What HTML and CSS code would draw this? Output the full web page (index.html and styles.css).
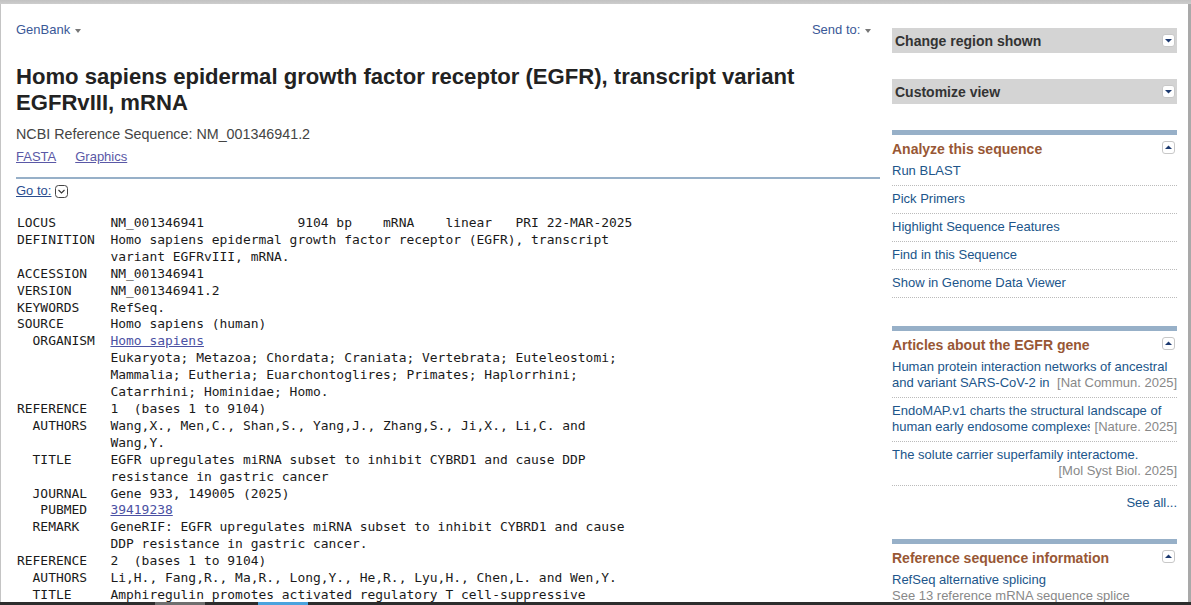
FILE: index.html
```html
<!DOCTYPE html>
<html lang="en">
<head>
<meta charset="utf-8">
<title>Homo sapiens epidermal growth factor receptor (EGFR), transcript variant EGFRvIII, mRNA</title>
<link rel="stylesheet" href="styles.css">
</head>
<body>
<div class="chrome-top"></div>
<div class="frame">
  <div class="page">
    <main class="main">
      <div class="topbar">
        <a class="menu-link" href="#">GenBank <span class="caret"></span></a>
        <a class="menu-link" href="#">Send to: <span class="caret"></span></a>
      </div>
      <h1 class="title">Homo sapiens epidermal growth factor receptor (EGFR), transcript variant EGFRvIII, mRNA</h1>
      <p class="refseq">NCBI Reference Sequence: NM_001346941.2</p>
      <p class="formats"><a href="#">FASTA</a><a href="#">Graphics</a></p>
      <div class="rule"></div>
      <div class="goto"><a href="#">Go to:</a><span class="goto-icon"><svg width="13" height="13" viewBox="0 0 13 13"><rect x="0.5" y="0.5" width="12" height="12" rx="3" ry="3" fill="#fff" stroke="#444"/><path d="M3.5 5 L6.5 8 L9.5 5" fill="none" stroke="#333" stroke-width="1.1"/></svg></span></div>
<pre class="record">LOCUS       NM_001346941            9104 bp    mRNA    linear   PRI 22-MAR-2025
DEFINITION  Homo sapiens epidermal growth factor receptor (EGFR), transcript
            variant EGFRvIII, mRNA.
ACCESSION   NM_001346941
VERSION     NM_001346941.2
KEYWORDS    RefSeq.
SOURCE      Homo sapiens (human)
  ORGANISM  <a href="#">Homo sapiens</a>
            Eukaryota; Metazoa; Chordata; Craniata; Vertebrata; Euteleostomi;
            Mammalia; Eutheria; Euarchontoglires; Primates; Haplorrhini;
            Catarrhini; Hominidae; Homo.
REFERENCE   1  (bases 1 to 9104)
  AUTHORS   Wang,X., Men,C., Shan,S., Yang,J., Zhang,S., Ji,X., Li,C. and
            Wang,Y.
  TITLE     EGFR upregulates miRNA subset to inhibit CYBRD1 and cause DDP
            resistance in gastric cancer
  JOURNAL   Gene 933, 149005 (2025)
   PUBMED   <a href="#">39419238</a>
  REMARK    GeneRIF: EGFR upregulates miRNA subset to inhibit CYBRD1 and cause
            DDP resistance in gastric cancer.
REFERENCE   2  (bases 1 to 9104)
  AUTHORS   Li,H., Fang,R., Ma,R., Long,Y., He,R., Lyu,H., Chen,L. and Wen,Y.
  TITLE     Amphiregulin promotes activated regulatory T cell-suppressive
            function via the AREG/EGFR signaling pathway in lung
            adenocarcinoma
</pre>
    </main>
    <aside class="sidebar">
      <div class="collapsed-box">
        <span>Change region shown</span>
        <span class="toggle"><svg width="13" height="13" viewBox="0 0 13 13"><path d="M3 5 L10 5 L6.5 8.5 Z" fill="#1d3a70"/></svg></span>
      </div>
      <div class="collapsed-box">
        <span>Customize view</span>
        <span class="toggle"><svg width="13" height="13" viewBox="0 0 13 13"><path d="M3 5 L10 5 L6.5 8.5 Z" fill="#1d3a70"/></svg></span>
      </div>

      <section class="portlet">
        <div class="portlet-head">
          <h3>Analyze this sequence</h3>
          <span class="toggle"><svg width="13" height="13" viewBox="0 0 13 13"><path d="M3 8 L10 8 L6.5 4.5 Z" fill="#1d3a70"/></svg></span>
        </div>
        <ul class="plist">
          <li><a href="#">Run BLAST</a></li>
          <li><a href="#">Pick Primers</a></li>
          <li><a href="#">Highlight Sequence Features</a></li>
          <li><a href="#">Find in this Sequence</a></li>
          <li><a href="#">Show in Genome Data Viewer</a></li>
        </ul>
      </section>

      <section class="portlet">
        <div class="portlet-head">
          <h3>Articles about the EGFR gene</h3>
          <span class="toggle"><svg width="13" height="13" viewBox="0 0 13 13"><path d="M3 8 L10 8 L6.5 4.5 Z" fill="#1d3a70"/></svg></span>
        </div>
        <ul class="plist articles">
          <li><a class="atitle" href="#">Human protein interaction networks of ancestral and variant SARS-CoV-2 in organ-specific cells and bodily fluids.</a><span class="journal">[Nat Commun. 2025]</span></li>
          <li><a class="atitle" href="#">EndoMAP.v1 charts the structural landscape of human early endosome complexes.</a><span class="journal">[Nature. 2025]</span></li>
          <li><a class="atitle" href="#">The solute carrier superfamily interactome.</a><span class="journal">[Mol Syst Biol. 2025]</span></li>
        </ul>
        <div class="seeall"><a href="#">See all...</a></div>
      </section>

      <section class="portlet">
        <div class="portlet-head">
          <h3>Reference sequence information</h3>
          <span class="toggle"><svg width="13" height="13" viewBox="0 0 13 13"><path d="M3 8 L10 8 L6.5 4.5 Z" fill="#1d3a70"/></svg></span>
        </div>
        <div class="refinfo">
          <div class="refinfo-title">RefSeq alternative splicing</div>
          <div class="refinfo-desc">See 13 reference mRNA sequence splice variants</div>
        </div>
      </section>
    </aside>
  </div>
</div>
<div class="taskbar"><span class="seg seg-gray"></span><span class="seg seg-blue"></span></div>
</body>
</html>
```
FILE: styles.css
```css
html, body {
  margin: 0;
  padding: 0;
  height: 100%;
  overflow: hidden;
  background: #fff;
}
body {
  font-family: "Liberation Sans", Arial, sans-serif;
  color: #333;
}
a { text-decoration: none; }

.chrome-top {
  height: 4px;
  background: linear-gradient(#c2c2c2, #cdcdcd);
}
.frame {
  border-left: 1px solid #c4c4c4;
  border-right: 3px solid #a9a9a9;
  height: calc(100% - 4px);
  box-sizing: border-box;
}
.page {
  display: flex;
  gap: 12px;
  padding-left: 15px;
}
.main {
  width: 864px;
  flex: none;
}

.topbar {
  display: flex;
  justify-content: space-between;
  padding: 18px 9px 0 0;
  height: 15px;
}
.menu-link {
  font-size: 13px;
  line-height: 15px;
  color: #3a5897;
}
.caret {
  display: inline-block;
  width: 0;
  height: 0;
  border-left: 3.5px solid transparent;
  border-right: 3.5px solid transparent;
  border-top: 4px solid #777;
  vertical-align: middle;
  margin-left: 1px;
}

.title {
  margin: 27px 0 0;
  font-size: 22.1px;
  line-height: 26px;
  font-weight: bold;
  color: #222;
  padding-right: 40px;
}
.refseq {
  margin: 10px 0 0;
  font-size: 14.3px;
  line-height: 17px;
  color: #444;
}
.formats {
  margin: 6px 0 0;
  font-size: 13px;
  line-height: 15px;
  display: flex;
  gap: 19px;
}
.formats a {
  color: #5a58a6;
  text-decoration: underline;
}
.rule {
  margin-top: 13px;
  height: 2px;
  background: #97b0c8;
}
.goto {
  margin-top: 4px;
  height: 15px;
  display: flex;
  align-items: center;
  gap: 4px;
  font-size: 13px;
  line-height: 15px;
}
.goto a {
  color: #2a4d8f;
  text-decoration: underline;
}
.goto-icon {
  display: flex;
  margin-top: 1px;
}

.record {
  margin: 17px 0 0;
  padding-left: 1px;
  font-family: "DejaVu Sans Mono", monospace;
  font-size: 12.94px;
  line-height: 16.9px;
  color: #1a1a1a;
}
.record a {
  color: #4b51a3;
  text-decoration: underline;
}

.sidebar {
  width: 285px;
  flex: none;
  padding-top: 24px;
}
.collapsed-box {
  height: 25px;
  background: #d4d4d4;
  display: flex;
  align-items: center;
  justify-content: space-between;
  padding: 0 2px 0 3px;
  font-size: 14px;
  font-weight: bold;
  color: #333;
  margin-bottom: 26px;
}
.toggle {
  display: flex;
  width: 13px;
  height: 13px;
  background: #fff;
  border: 1px solid #c8c8c8;
  border-radius: 3px;
  box-sizing: border-box;
  align-items: center;
  justify-content: center;
  margin-top: -1px;
}
.toggle svg { flex: none; }

.portlet {
  border-top: 5px solid #97b0c8;
  margin-bottom: 28px;
}
.portlet-head {
  display: flex;
  justify-content: space-between;
  align-items: flex-start;
  padding-top: 6px;
  padding-right: 2px;
}
.portlet-head h3 {
  margin: 0;
  font-size: 14px;
  line-height: 17px;
  color: #985735;
}
.portlet-head .toggle { margin-top: 0; }

.plist {
  list-style: none;
  margin: 0;
  padding: 0;
}
.plist li {
  padding: 5px 0 6px;
  border-bottom: 1px dotted #bbb;
  font-size: 13px;
  line-height: 16px;
}
.plist a { color: #20558a; }

.articles li {
  position: relative;
}
.atitle {
  display: block;
  height: 32px;
  overflow: hidden;
}
.journal {
  position: absolute;
  right: 0;
  bottom: 6px;
  background: #fff;
  padding-left: 5px;
  color: #888;
  line-height: 16px;
}

.seeall {
  text-align: right;
  padding-top: 9px;
  font-size: 13px;
  line-height: 16px;
}
.seeall a { color: #20558a; }

.refinfo {
  padding-top: 5px;
  font-size: 13px;
  line-height: 16px;
}
.refinfo-title { color: #20558a; }
.refinfo-desc { color: #888; }

.taskbar {
  position: fixed;
  left: 0;
  right: 0;
  bottom: 0;
  height: 3px;
  background: #2d2d2d;
}
.seg {
  position: absolute;
  top: 0;
  height: 3px;
  width: 50px;
}
.seg-gray { left: 155px; background: #6f6f6f; }
.seg-blue { left: 258px; background: #4aa3de; }
```
